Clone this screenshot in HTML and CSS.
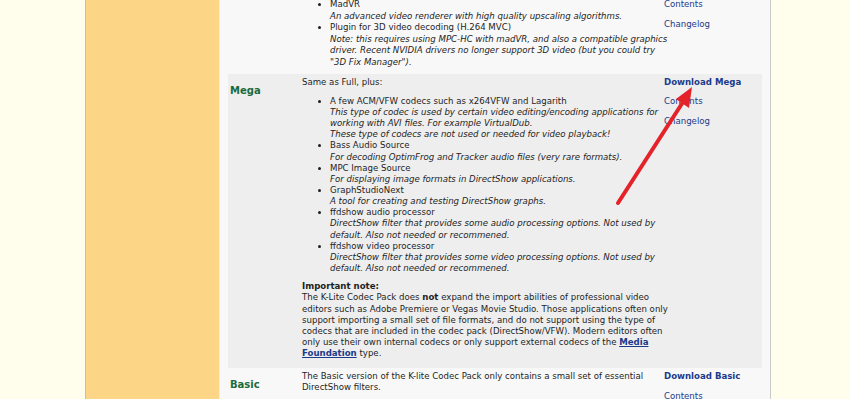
FILE: index.html
```html
<!doctype html>
<html lang="en">
<head>
    <meta charset="UTF-8">
    <title>K-Lite Codec Pack - Variants</title>
    <link rel="stylesheet" href="styles.css">
</head>
<body>
    <div class="page">
        <div class="spacer"></div>
        <div class="sidebar"></div>
        <div class="main">
            <div class="variant first">
                <div class="name"></div>
                <div class="desc">
                    <ul class="top-list">
                        <li>MadVR<br><i>An advanced video renderer with high quality upscaling algorithms.</i></li>
                        <li>Plugin for 3D video decoding (H.264 MVC)<br><i>Note: this requires using MPC-HC with madVR, and also a compatible graphics<br>driver. Recent NVIDIA drivers no longer support 3D video (but you could try<br>"3D Fix Manager").</i></li>
                    </ul>
                </div>
                <div class="links">
                    <a href="#">Contents</a>
                    <a href="#">Changelog</a>
                </div>
            </div>

            <div class="variant alt">
                <div class="name">Mega</div>
                <div class="desc">
                    <p>Same as Full, plus:</p>
                    <ul>
                        <li>A few ACM/VFW codecs such as x264VFW and Lagarith<br><i>This type of codec is used by certain video editing/encoding applications for<br>working with AVI files. For example VirtualDub.<br>These type of codecs are not used or needed for video playback!</i></li>
                        <li>Bass Audio Source<br><i>For decoding OptimFrog and Tracker audio files (very rare formats).</i></li>
                        <li>MPC Image Source<br><i>For displaying image formats in DirectShow applications.</i></li>
                        <li>GraphStudioNext<br><i>A tool for creating and testing DirectShow graphs.</i></li>
                        <li>ffdshow audio processor<br><i>DirectShow filter that provides some audio processing options. Not used by<br>default. Also not needed or recommened.</i></li>
                        <li>ffdshow video processor<br><i>DirectShow filter that provides some video processing options. Not used by<br>default. Also not needed or recommened.</i></li>
                    </ul>
                    <p><b>Important note:</b><br>The K-Lite Codec Pack does <b>not</b> expand the import abilities of professional video<br>editors such as Adobe Premiere or Vegas Movie Studio. Those applications often only<br>support importing a small set of file formats, and do not support using the type of<br>codecs that are included in the codec pack (DirectShow/VFW). Modern editors often<br>only use their own internal codecs or only support external codecs of the <a class="inline" href="#">Media<br>Foundation</a> type.</p>
                </div>
                <div class="links">
                    <a class="download" href="#">Download Mega</a>
                    <a href="#">Contents</a>
                    <a href="#">Changelog</a>
                </div>
            </div>

            <div class="variant">
                <div class="name">Basic</div>
                <div class="desc">
                    <p>The Basic version of the K-lite Codec Pack only contains a small set of essential<br>DirectShow filters.</p>
                </div>
                <div class="links">
                    <a class="download" href="#">Download Basic</a>
                    <a href="#">Contents</a>
                    <a href="#">Changelog</a>
                </div>
            </div>
        </div>
    </div>

    <svg class="arrow" width="850" height="399" viewBox="0 0 850 399">
        <line x1="618" y1="203" x2="683" y2="102" stroke="#e42229" stroke-width="4" stroke-linecap="round"/>
        <polygon points="692,87 676,99 689,108" fill="#e42229"/>
    </svg>
</body>
</html>
```

FILE: styles.css
```css
body {
    margin: 0;
    background-color: #fffeec;
    font-family: "DejaVu Sans", Verdana, sans-serif;
    font-size: 8.6px;
    line-height: 11.15px;
    color: #1e1e1e;
    overflow: hidden;
}
.page {
    display: flex;
    height: 399px;
}
.spacer {
    width: 85px;
}
.sidebar {
    width: 133px;
    background-color: #fdd587;
    border-left: 1px solid #dcbd7c;
    border-right: 1px solid #fbeccb;
}
.main {
    width: 534px;
    padding: 0 8px;
    background-color: #f8f8f8;
    border-right: 1px solid #c9c9c9;
    margin-top: -1px;
}
.variant {
    display: grid;
    grid-template-columns: 74px 362px 99px;
    padding: 3px 0 9px;
}
.variant.alt {
    background-color: #eeeeee;
}
.variant.first {
    padding: 0 0 5px;
}
.name {
    padding: 8px 0 0 2px;
    font-size: 10px;
    font-weight: bold;
    color: #1a6a3c;
}
.desc {
    margin-right: -10px;
}
.desc p {
    margin: 0;
}
.desc ul {
    margin: 8px 0 7px;
    padding-left: 28px;
}
.desc ul.top-list {
    margin: 0;
    line-height: 11.6px;
}
.links {
    position: relative;
}
.links a {
    display: block;
    margin-bottom: 8.4px;
    color: #1b3a8a;
    text-decoration: none;
}
.links a.download {
    font-weight: bold;
}
a.inline {
    color: #1b3a8a;
    font-weight: bold;
}
.arrow {
    position: absolute;
    left: 0;
    top: 0;
    pointer-events: none;
}
```
